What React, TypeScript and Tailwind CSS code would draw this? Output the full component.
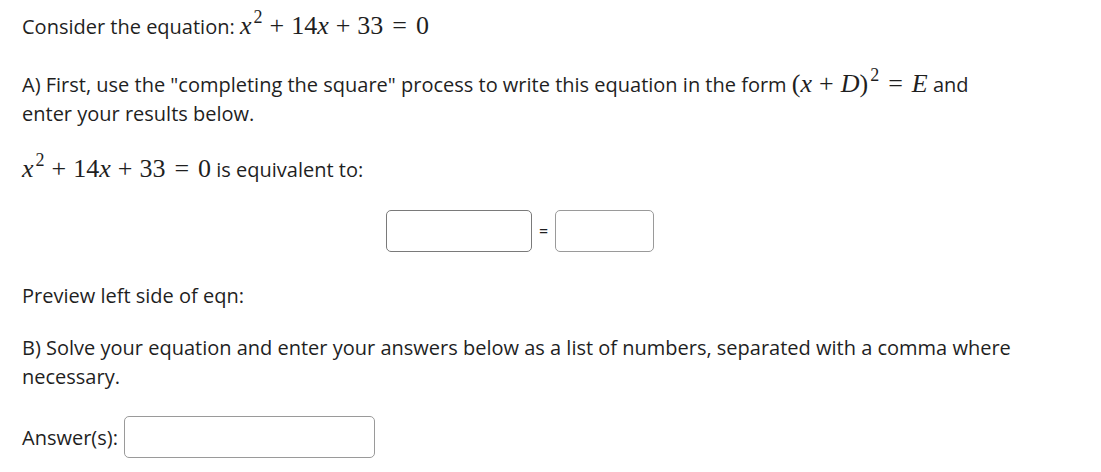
const serif = { fontFamily: '"Liberation Serif", "DejaVu Serif", serif' };

function V({ children }: { children: string }) {
	return <span className="italic">{children}</span>;
}

function Op({ children, wide }: { children: string; wide?: boolean }) {
	return (
		<span className={wide ? "mx-[9px]" : "mx-[7px]"}>{children}</span>
	);
}

function Sq() {
	return (
		<sup className="relative -top-[11px] ml-[2px] text-[18px] not-italic">2</sup>
	);
}

function Quad() {
	return (
		<span className="whitespace-nowrap text-[26px] leading-none" style={serif}>
			<V>x</V>
			<Sq />
			<Op>+</Op>
			14
			<V>x</V>
			<Op>+</Op>
			33
			<Op wide>=</Op>0
		</span>
	);
}

function Field({ className }: { className: string }) {
	return (
		<input
			type="text"
			className={`h-[42px] rounded-[5px] border bg-white px-2 outline-none ${className}`}
		/>
	);
}

export default function App() {
	return (
		<div
			className="w-[1101px] h-[472px] bg-white px-[22px] pt-[12px] text-[20px] leading-[29px] text-[#1f1f1f]"
			style={{ fontFamily: '"Open Sans", "Noto Sans", sans-serif' }}
		>
			<p>
				Consider the equation: <Quad />
			</p>

			<p className="mt-[29px] w-[975px]">
				A) First, use the "completing the square" process to write this
				equation in the form{" "}
				<span className="whitespace-nowrap text-[26px] leading-none" style={serif}>
					(<V>x</V>
					<Op>+</Op>
					<V>D</V>)
					<Sq />
					<Op wide>=</Op>
					<V>E</V>
				</span>{" "}
				and enter your results below.
			</p>

			<p className="mt-[27px]">
				<Quad /> is equivalent to:
			</p>

			<div className="mt-[26px] flex w-[996px] items-center justify-center">
				<Field className="w-[146px] border-[#7a7a7a]" />
				<span className="mx-[7px] text-[16px]">=</span>
				<Field className="w-[99px] border-[#9a9a9a]" />
			</div>

			<p className="mt-[29px]">Preview left side of eqn:</p>

			<p className="mt-[23px] w-[1000px]">
				B) Solve your equation and enter your answers below as a list of
				numbers, separated with a comma where necessary.
			</p>

			<div className="mt-[25px] flex items-center gap-[6px]">
				<span>Answer(s):</span>
				<Field className="w-[251px] border-[#9a9a9a]" />
			</div>
		</div>
	);
}
